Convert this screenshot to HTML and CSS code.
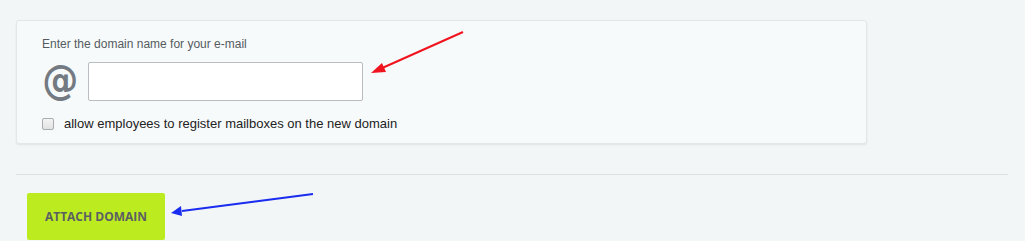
FILE: index.html
```html
<!DOCTYPE html>
<html>
<head>
<meta charset="utf-8">
<link rel="stylesheet" href="styles.css">
</head>
<body>
<div class="page">
  <div class="card">
    <div class="label">Enter the domain name for your e-mail</div>
    <div class="row">
      <span class="at">@</span>
      <input class="domain" type="text">
    </div>
    <label class="check">
      <span class="box"></span>
      <span class="check-text">allow employees to register mailboxes on the new domain</span>
    </label>
  </div>
  <div class="sep"></div>
  <button class="attach">ATTACH DOMAIN</button>
</div>
<svg class="arrows" width="1025" height="241" viewBox="0 0 1025 241">
  <line x1="463" y1="32" x2="380" y2="69" stroke="#f0141e" stroke-width="2"/>
  <polygon points="371,73 382,63 386,72" fill="#f0141e"/>
  <line x1="313" y1="194" x2="182" y2="211" stroke="#1a2cf0" stroke-width="2"/>
  <polygon points="171,213 181,206 182,216" fill="#1a2cf0"/>
</svg>
</body>
</html>
```
FILE: styles.css
```css
html, body {
  margin: 0;
  padding: 0;
}
body {
  background: #f3f6f7;
  font-family: "Liberation Sans", Arial, sans-serif;
  width: 1025px;
  height: 241px;
  overflow: hidden;
  position: relative;
}
.page {
  padding: 20px 17px 0 16px;
}
.card {
  box-sizing: border-box;
  width: 851px;
  height: 124px;
  background: #f7fafb;
  border: 1px solid #e3e7ea;
  border-radius: 3px;
  box-shadow: 0 1px 2px rgba(0,0,0,0.08);
  padding: 16px 25px 0 25px;
}
.label {
  font-size: 12px;
  line-height: 14px;
  color: #555a60;
}
.row {
  display: flex;
  align-items: center;
  margin-top: 11px;
  height: 39px;
}
.at {
  display: inline-block;
  font-family: "DejaVu Sans", sans-serif;
  font-size: 41px;
  font-weight: bold;
  color: #737a82;
  width: 36px;
  line-height: 39px;
  margin-right: 10px;
  position: relative;
  top: -1px;
  transform: scaleX(0.88);
  transform-origin: 2px 50%;
  white-space: nowrap;
}
.domain {
  box-sizing: border-box;
  width: 275px;
  height: 39px;
  border: 1px solid #b9bcc0;
  border-radius: 2px;
  background: #fff;
  margin: 0;
  padding: 0 8px;
}
.check {
  display: flex;
  align-items: center;
  margin-top: 15px;
}
.box {
  box-sizing: border-box;
  width: 12px;
  height: 12px;
  border: 1px solid #a9adb2;
  border-radius: 2px;
  background: linear-gradient(#f4f4f4, #e2e2e2);
  margin-right: 10px;
}
.check-text {
  font-size: 13px;
  color: #222;
}
.sep {
  height: 1px;
  background: #dde0e3;
  margin-top: 30px;
}
.attach {
  display: block;
  margin: 18px 0 0 11px;
  width: 138px;
  height: 47px;
  border: none;
  border-radius: 2px;
  background: #bcec20;
  color: #5b5f62;
  font-family: "Open Sans", sans-serif;
  font-weight: bold;
  font-size: 12px;
  padding: 0;
}
.arrows {
  position: absolute;
  left: 0;
  top: 0;
  pointer-events: none;
}
```
